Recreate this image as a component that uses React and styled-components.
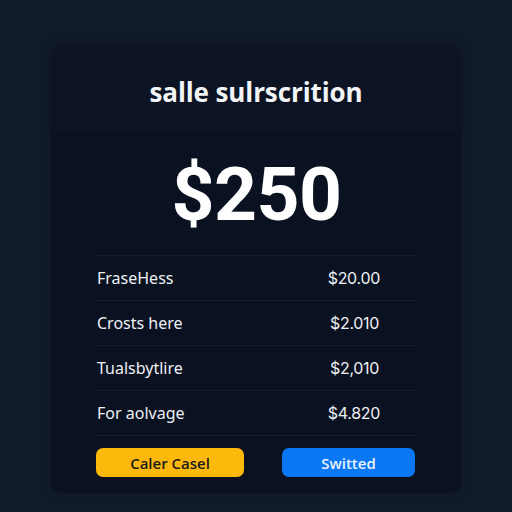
import React from "react";
import styled, { createGlobalStyle } from "styled-components";

const Global = createGlobalStyle`
  html, body { margin: 0; padding: 0; background: #111a2a; }
  #root { min-height: 512px; }
`;

const Page = styled.div`
  width: 512px;
  height: 512px;
  box-sizing: border-box;
  padding: 45px 51px 19px 51px;
  background: #111a2a;
  font-family: "Open Sans", "Noto Sans", sans-serif;
`;

const Card = styled.div`
  height: 448px;
  border-radius: 10px;
  background: #0a1221;
  overflow: hidden;
  display: flex;
  flex-direction: column;
  box-shadow: 0 0 10px rgba(0, 0, 0, 0.15);
`;

const Header = styled.div`
  height: 88px;
  display: flex;
  align-items: center;
  justify-content: center;
  background: #0c1424;
`;

const Title = styled.h1`
  margin: 0;
  font-size: 26px;
  font-weight: 700;
  color: #f3f4f6;
  letter-spacing: -0.1px;
  padding-top: 6px;
`;

const Body = styled.div`
  flex: 1;
  display: flex;
  flex-direction: column;
  padding: 0 43px 0 44px;
`;

const Price = styled.div`
  height: 122px;
  display: flex;
  align-items: center;
  justify-content: center;
  font-family: Roboto, "Noto Sans", sans-serif;
  font-weight: 700;
  font-size: 75px;
  color: #ffffff;
  letter-spacing: -0.5px;
  padding-top: 0;
  box-sizing: border-box;
`;

const List = styled.div`
  border-top: 1px solid #151e2e;
`;

const Row = styled.div`
  height: 44px;
  display: flex;
  align-items: center;
  justify-content: space-between;
  border-bottom: 1px solid #151e2e;
  padding: 0 38px 0 2px;
  font-family: "Noto Sans", "Open Sans", sans-serif;
  font-size: 16px;
  color: #eef0f4;
`;

const Amount = styled.span`
  font-family: Inter, "Noto Sans", sans-serif;
  font-size: 16px;
  letter-spacing: -0.3px;
  min-width: 50px;
`;

const Actions = styled.div`
  display: flex;
  justify-content: space-between;
  padding: 12px 3px 0 1px;
`;

const Button = styled.button`
  height: 29px;
  width: ${(p) => p.$w}px;
  border: none;
  border-radius: 7px;
  background: ${(p) => p.$bg};
  color: ${(p) => p.$fg};
  font-family: "Open Sans", "Noto Sans", sans-serif;
  font-weight: 600;
  font-size: 15px;
  display: flex;
  align-items: center;
  justify-content: center;
  padding: 0;
`;

const rows = [
  ["FraseHess", "$20.00"],
  ["Crosts here", "$2.010"],
  ["Tualsbytlire", "$2,010"],
  ["For aolvage", "$4.820"],
];

export default function App() {
  return (
    <Page>
      <Global />
      <Card>
        <Header>
          <Title>salle sulrscrition</Title>
        </Header>
        <Body>
          <Price>$250</Price>
          <List>
            {rows.map(([label, value]) => (
              <Row key={label}>
                <span>{label}</span>
                <Amount>{value}</Amount>
              </Row>
            ))}
          </List>
          <Actions>
            <Button $w={148} $bg="#fdb90b" $fg="#1a1a1a">Caler Casel</Button>
            <Button $w={133} $bg="#0a78f5" $fg="#eaf2ff">Switted</Button>
          </Actions>
        </Body>
      </Card>
    </Page>
  );
}
